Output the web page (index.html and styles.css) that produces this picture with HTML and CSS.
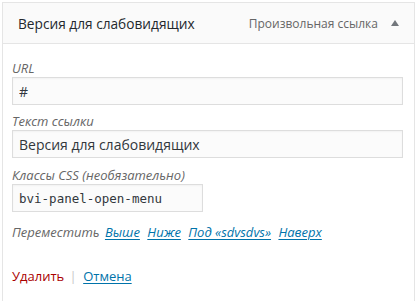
FILE: index.html
```html
<!DOCTYPE html>
<html lang="ru">
  <head>
    <meta charset="UTF-8" />
    <title>Пункт меню</title>
    <link rel="stylesheet" href="styles.css">
  </head>
  <body>
    <div class="menu-item">
      <div class="item-bar">
        <span class="item-title">Версия для слабовидящих</span>
        <span class="item-controls">
          <span class="item-type">Произвольная ссылка</span>
          <span class="item-toggle"></span>
        </span>
      </div>

      <div class="item-settings">
        <p class="field">
          <label for="edit-url">URL</label>
          <input id="edit-url" class="wide" type="text" value="#" />
        </p>
        <p class="field">
          <label for="edit-title">Текст ссылки</label>
          <input id="edit-title" class="wide" type="text" value="Версия для слабовидящих" />
        </p>
        <p class="field">
          <label for="edit-classes">Классы CSS (необязательно)</label>
          <input id="edit-classes" class="code" type="text" value="bvi-panel-open-menu" />
        </p>

        <p class="move">
          <span>Переместить</span>
          <a href="#">Выше</a>
          <a href="#">Ниже</a>
          <a href="#">Под «sdvsdvs»</a>
          <a href="#">Наверх</a>
        </p>

        <div class="actions">
          <a class="delete" href="#">Удалить</a>
          <span class="sep">|</span>
          <a class="cancel" href="#">Отмена</a>
        </div>
      </div>
    </div>
  </body>
</html>
```

FILE: styles.css
```css
body {
  margin: 0;
  font-family: "Open Sans", sans-serif;
  font-size: 13px;
  color: #444;
  background: #fff;
}

.menu-item {
  margin: 2px 1px 0 2px;
}

.item-bar {
  height: 42px;
  box-sizing: border-box;
  border: 1px solid #e5e5e5;
  background: #fafafa;
  padding: 0 15px;
  display: flex;
  align-items: center;
  justify-content: space-between;
}

.item-title {
  font-size: 13.7px;
  color: #23282d;
}

.item-controls {
  display: flex;
  align-items: center;
  gap: 13px;
}

.item-type {
  font-size: 12px;
  color: #666;
}

.item-toggle {
  width: 0;
  height: 0;
  border-left: 4px solid transparent;
  border-right: 4px solid transparent;
  border-bottom: 6px solid #72777c;
  margin-bottom: 1px;
}

.item-settings {
  border: 1px solid #e5e5e5;
  border-top: none;
  padding: 15px 11px 16px 9px;
}

.field {
  margin: 0 0 7px;
}

.field + .field {
  margin-bottom: 8px;
}

.field label {
  display: block;
  font-style: italic;
  color: #666;
  line-height: 18px;
}

.field input {
  display: block;
  box-sizing: border-box;
  height: 28px;
  margin: 0;
  padding: 0 6px;
  border: 1px solid #ddd;
  background: #fbfbfb;
  box-shadow: inset 0 1px 2px rgba(0, 0, 0, 0.04);
  font-family: "Open Sans", sans-serif;
  font-size: 14px;
  color: #32373c;
}

.wide {
  width: 100%;
}

.code {
  width: 191px;
  font-family: "DejaVu Sans Mono", monospace !important;
  font-size: 12.5px !important;
}

.move {
  margin: 11px 0 0;
  line-height: 18px;
  font-style: italic;
  color: #666;
}

.move a {
  color: #0073aa;
  margin-left: 2px;
  text-underline-offset: 2px;
}

.move a + a {
  margin-left: 4px;
}

.actions {
  margin-top: 26px;
  line-height: 18px;
}

.delete {
  color: #a00;
  text-decoration: none;
}

.sep {
  color: #c8c8c8;
  margin: 0 3px 0 2px;
}

.cancel {
  color: #0073aa;
  text-underline-offset: 2px;
}
```
